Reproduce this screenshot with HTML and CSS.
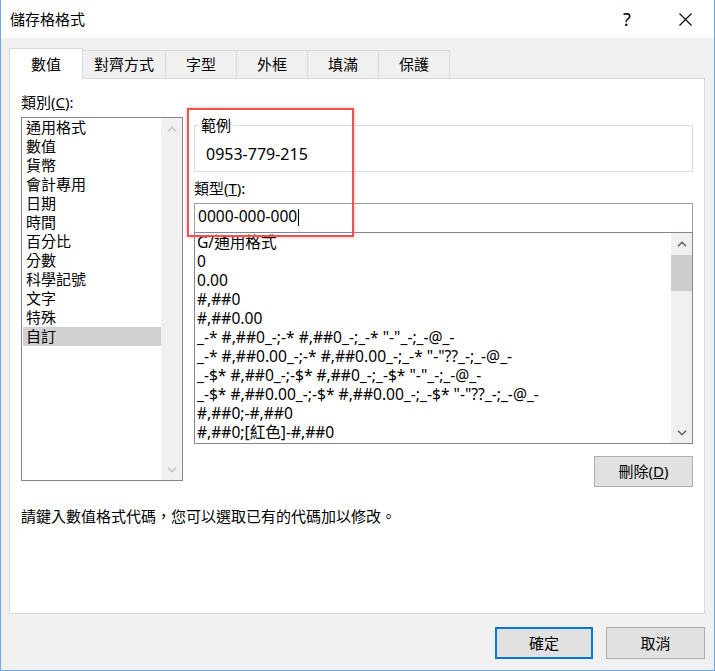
FILE: index.html
```html
<!DOCTYPE html>
<html lang="zh-Hant">
<head>
    <meta charset="UTF-8">
    <meta name="viewport" content="width=device-width, initial-scale=1.0">
    <title>儲存格格式</title>
    <link rel="stylesheet" href="styles.css">
</head>
<body>
    <div class="window">
        <div class="titlebar">
            <span class="title">儲存格格式</span>
            <span class="help">?</span>
            <span class="close">
                <svg width="13" height="13" viewBox="0 0 13 13"><path d="M0.5 0.5L12.5 12.5M12.5 0.5L0.5 12.5" stroke="#000" stroke-width="1.1" fill="none"/></svg>
            </span>
        </div>
        <div class="client">
            <div class="tabs">
                <div class="tab active">數值</div>
                <div class="tab">對齊方式</div>
                <div class="tab">字型</div>
                <div class="tab">外框</div>
                <div class="tab">填滿</div>
                <div class="tab">保護</div>
            </div>
            <div class="panel">
                <div class="columns">
                    <div class="left">
                        <div class="label">類別(<u>C</u>):</div>
                        <div class="listbox category">
                            <ul class="items">
                                <li>通用格式</li>
                                <li>數值</li>
                                <li>貨幣</li>
                                <li>會計專用</li>
                                <li>日期</li>
                                <li>時間</li>
                                <li>百分比</li>
                                <li>分數</li>
                                <li>科學記號</li>
                                <li>文字</li>
                                <li>特殊</li>
                                <li class="selected">自訂</li>
                            </ul>
                            <div class="scrollbar disabled">
                                <span class="sb-btn"><svg width="10" height="6" viewBox="0 0 10 6"><path d="M1 5.3L5 1.3L9 5.3" fill="none" stroke-width="1.5"/></svg></span>
                                <span class="sb-track"></span>
                                <span class="sb-btn"><svg width="10" height="6" viewBox="0 0 10 6"><path d="M1 0.7L5 4.7L9 0.7" fill="none" stroke-width="1.5"/></svg></span>
                            </div>
                        </div>
                    </div>
                    <div class="right">
                        <div class="sample">
                            <div class="sample-title">範例</div>
                            <div class="sample-value">0953-779-215</div>
                        </div>
                        <div class="label type-label">類型(<u>T</u>):</div>
                        <div class="input">0000-000-000<span class="caret"></span></div>
                        <div class="listbox formats">
                            <ul class="items">
                                <li>G/通用格式</li>
                                <li>0</li>
                                <li>0.00</li>
                                <li>#,##0</li>
                                <li>#,##0.00</li>
                                <li>_-* #,##0_-;-* #,##0_-;_-* "-"_-;_-@_-</li>
                                <li>_-* #,##0.00_-;-* #,##0.00_-;_-* "-"??_-;_-@_-</li>
                                <li>_-$* #,##0_-;-$* #,##0_-;_-$* "-"_-;_-@_-</li>
                                <li>_-$* #,##0.00_-;-$* #,##0.00_-;_-$* "-"??_-;_-@_-</li>
                                <li>#,##0;-#,##0</li>
                                <li>#,##0;[紅色]-#,##0</li>
                            </ul>
                            <div class="scrollbar">
                                <span class="sb-btn"><svg width="10" height="6" viewBox="0 0 10 6"><path d="M1 5.3L5 1.3L9 5.3" fill="none" stroke-width="1.5"/></svg></span>
                                <span class="sb-track"><span class="sb-thumb"></span></span>
                                <span class="sb-btn"><svg width="10" height="6" viewBox="0 0 10 6"><path d="M1 0.7L5 4.7L9 0.7" fill="none" stroke-width="1.5"/></svg></span>
                            </div>
                        </div>
                        <div class="actions">
                            <button class="btn">刪除(<u>D</u>)</button>
                        </div>
                    </div>
                </div>
                <p class="hint">請鍵入數值格式代碼，您可以選取已有的代碼加以修改。</p>
                <div class="highlight"></div>
            </div>
            <div class="buttons">
                <button class="btn primary">確定</button>
                <button class="btn">取消</button>
            </div>
        </div>
    </div>
</body>
</html>
```

FILE: styles.css
```css
* {
    box-sizing: border-box;
}
body {
    margin: 0;
    font-family: "Noto Sans", "Noto Sans CJK TC", sans-serif;
    font-size: 15px;
    line-height: 19px;
    color: #000;
    background: #fff;
}
.window {
    width: 715px;
    height: 671px;
    border: 1px solid #6ba7e0;
    border-top: 0;
    display: flex;
    flex-direction: column;
}
.titlebar {
    height: 38px;
    display: flex;
    align-items: center;
    padding: 0 6px 0 9px;
    background: #fff;
}
.title {
    flex: 1;
}
.help {
    width: 46px;
    margin-right: 12px;
    text-align: center;
    font-size: 18px;
}
.close {
    width: 46px;
    display: flex;
    justify-content: center;
}
.client {
    flex: 1;
    background: #f0f0f0;
    padding: 10px 9px 0 8px;
}
.tabs {
    display: flex;
    align-items: flex-end;
    height: 30px;
}
.tab {
    height: 28px;
    min-width: 72px;
    padding: 0 11px;
    margin-left: -1px;
    display: flex;
    align-items: center;
    justify-content: center;
    border: 1px solid #d9d9d9;
    border-bottom: 0;
    background: #f0f0f0;
}
.tab.active {
    height: 31px;
    min-width: 74px;
    margin-left: 0;
    margin-bottom: -1px;
    background: #fff;
    position: relative;
    z-index: 1;
}
.panel {
    position: relative;
    height: 536px;
    background: #fff;
    border: 1px solid #d9d9d9;
    padding: 14px 10px 0 11px;
}
.columns {
    display: grid;
    grid-template-columns: 162px 499px;
    column-gap: 11px;
}
.category {
    margin-top: 5px;
    height: 364px;
}
.listbox {
    display: flex;
    border: 1px solid #828790;
    background: #fff;
}
.items {
    flex: 1;
    list-style: none;
    margin: 0;
    padding: 0;
    white-space: nowrap;
    overflow: hidden;
}
.category .items li {
    height: 19px;
    margin-left: 1px;
    padding-left: 3px;
}
.category .items li.selected {
    background: #d1d1d1;
}
.scrollbar {
    width: 21px;
    display: flex;
    flex-direction: column;
    background: #f0f0f0;
}
.sb-btn {
    height: 21px;
    display: flex;
    align-items: center;
    justify-content: center;
}
.sb-btn svg {
    stroke: #606060;
}
.scrollbar.disabled .sb-btn svg {
    stroke: #c2c2c2;
}
.sb-track {
    flex: 1;
    display: flex;
    flex-direction: column;
}
.sb-thumb {
    height: 36px;
    margin-top: 1px;
    background: #cdcdcd;
}
.sample {
    margin-top: 32px;
    height: 47px;
    border: 1px solid #dcdcdc;
}
.sample-title {
    width: fit-content;
    margin: -10px 0 0 4px;
    padding: 0 2px;
    background: #fff;
}
.sample-value {
    margin-top: 10px;
    padding-left: 11px;
    font-size: 16px;
}
.type-label {
    margin-top: 7px;
}
.input {
    margin-top: 5px;
    height: 30px;
    display: flex;
    align-items: center;
    padding: 0 0 3px 3px;
    border: 1px solid #a0a0a0;
    font-size: 15.6px;
}
.caret {
    display: inline-block;
    width: 1px;
    height: 17px;
    margin-left: 1px;
    margin-top: 2px;
    background: #000;
}
.formats {
    margin-top: -1px;
    height: 212px;
    font-size: 15.6px;
}
.formats .items li {
    height: 19px;
    padding-left: 2px;
}
.actions {
    display: flex;
    justify-content: flex-end;
    margin-top: 12px;
}
.btn {
    font: inherit;
    color: #000;
    height: 31px;
    width: 99px;
    padding: 0;
    background: #e1e1e1;
    border: 1px solid #adadad;
}
.hint {
    margin: 20px 0 0;
}
.highlight {
    position: absolute;
    left: 177px;
    top: 29px;
    width: 167px;
    height: 129px;
    border: 2px solid #ef5350;
    box-shadow: 0 0 3px rgba(239, 83, 80, 0.5);
}
.buttons {
    display: flex;
    justify-content: flex-end;
    gap: 13px;
    margin-top: 13px;
}
.buttons .btn {
    height: 32px;
}
.btn.primary {
    width: 98px;
    border: 2px solid #0078d7;
}
```
